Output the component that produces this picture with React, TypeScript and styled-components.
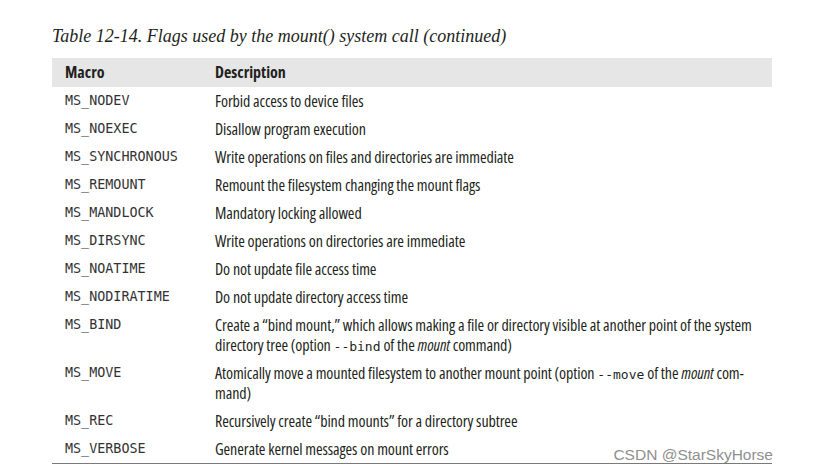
import React from 'react'
import styled, { createGlobalStyle } from 'styled-components'

const GlobalStyle = createGlobalStyle`
  body {
    margin: 0;
    background: #ffffff;
  }
`

const Page = styled.div`
  position: relative;
  width: 816px;
  height: 474px;
  padding: 25px 0 0 52px;
  box-sizing: border-box;
  background: #ffffff;
  color: #231f20;
  overflow: hidden;
`

const Caption = styled.div`
  font-family: 'Liberation Serif', serif;
  font-style: italic;
  font-size: 18px;
  line-height: 22px;
  color: #231f20;
  margin-bottom: 11px;
`

const Table = styled.div`
  width: 720px;
  border-bottom: 1px solid #7a7a7a;
`

const Row = styled.div<{ $head?: boolean }>`
  display: grid;
  grid-template-columns: 150px 1fr;
  padding: ${({ $head }) => ($head ? '4px 0 4px 13px' : '4px 0 4px 13px')};
  background: ${({ $head }) => ($head ? '#e6e6e6' : 'transparent')};
`

const HeadCell = styled.div`
  font-family: 'Open Sans', 'Liberation Sans', sans-serif;
  font-stretch: 76%;
  font-weight: 700;
  font-size: 16px;
  line-height: 21px;
`

const MacroCell = styled.div`
  font-family: 'DejaVu Sans Mono', 'Liberation Mono', monospace;
  font-size: 13.4px;
  line-height: 20px;
  color: #333;
`

const DescCell = styled.div`
  font-family: 'Open Sans', 'Liberation Sans', sans-serif;
  font-stretch: 79%;
  font-size: 16px;
  line-height: 20px;
  letter-spacing: -0.1px;
`

const Code = styled.span`
  font-family: 'DejaVu Sans Mono', 'Liberation Mono', monospace;
  font-size: 13px;
  line-height: 1;
  letter-spacing: 0;
`

const Watermark = styled.div`
  position: absolute;
  right: 43px;
  bottom: 10px;
  font-family: 'Liberation Sans', Arial, sans-serif;
  font-size: 15.5px;
  color: #8f8f8f;
`

const flags: { macro: string; desc: React.ReactNode }[] = [
  { macro: 'MS_NODEV', desc: 'Forbid access to device files' },
  { macro: 'MS_NOEXEC', desc: 'Disallow program execution' },
  { macro: 'MS_SYNCHRONOUS', desc: 'Write operations on files and directories are immediate' },
  { macro: 'MS_REMOUNT', desc: 'Remount the filesystem changing the mount flags' },
  { macro: 'MS_MANDLOCK', desc: 'Mandatory locking allowed' },
  { macro: 'MS_DIRSYNC', desc: 'Write operations on directories are immediate' },
  { macro: 'MS_NOATIME', desc: 'Do not update file access time' },
  { macro: 'MS_NODIRATIME', desc: 'Do not update directory access time' },
  {
    macro: 'MS_BIND',
    desc: (
      <>
        Create a “bind mount,” which allows making a file or directory visible at another point of the system
        directory tree (option <Code>--bind</Code> of the <i>mount</i> command)
      </>
    ),
  },
  {
    macro: 'MS_MOVE',
    desc: (
      <>
        Atomically move a mounted filesystem to another mount point (option <Code>--move</Code> of the <i>mount</i>{' '}
        com-mand)
      </>
    ),
  },
  { macro: 'MS_REC', desc: 'Recursively create “bind mounts” for a directory subtree' },
  { macro: 'MS_VERBOSE', desc: 'Generate kernel messages on mount errors' },
]

export default function App() {
  return (
    <>
      <GlobalStyle />
      <Page>
        <Caption>Table 12-14. Flags used by the mount() system call (continued)</Caption>
        <Table>
          <Row $head>
            <HeadCell>Macro</HeadCell>
            <HeadCell>Description</HeadCell>
          </Row>
          {flags.map((f) => (
            <Row key={f.macro}>
              <MacroCell>{f.macro}</MacroCell>
              <DescCell>{f.desc}</DescCell>
            </Row>
          ))}
        </Table>
        <Watermark>CSDN @StarSkyHorse</Watermark>
      </Page>
    </>
  )
}
